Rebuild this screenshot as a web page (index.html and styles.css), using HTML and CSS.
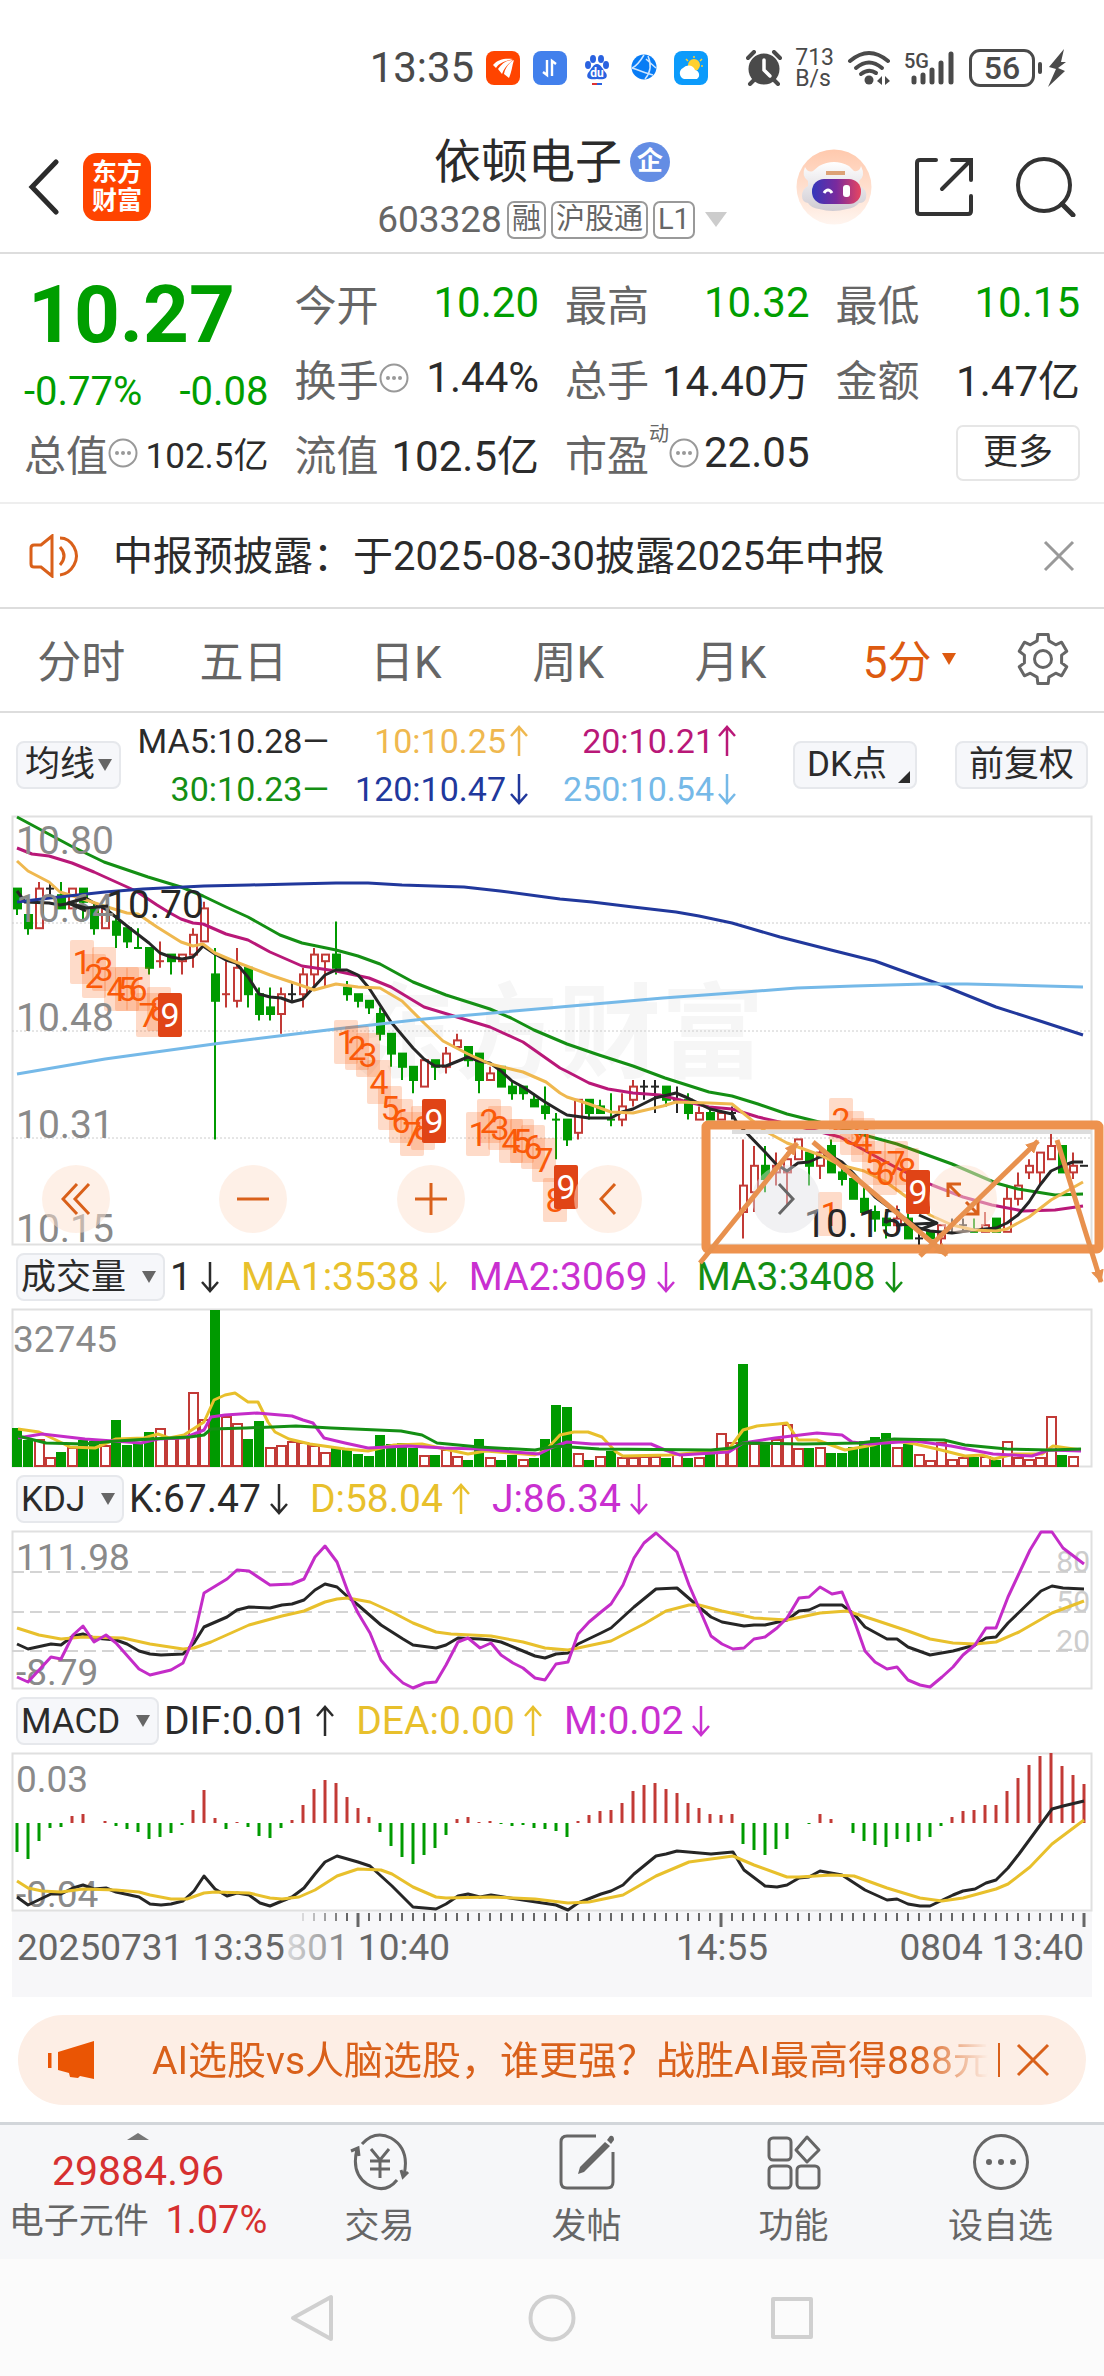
FILE: index.html
```html
<!DOCTYPE html>
<html lang="zh-CN">
<head>
    <meta charset="UTF-8">
    <meta name="viewport" content="width=device-width, initial-scale=1.0">
    <title>依顿电子 603328</title>
    <link rel="stylesheet" href="styles.css">
</head>
<body>
    <!-- Shared arrow shapes -->
    <svg class="defs" width="0" height="0" aria-hidden="true">
        <symbol id="up" viewBox="0 0 20 32"><path d="M10 31V2M2 11l8-9 8 9" fill="none" stroke="currentColor" stroke-width="2.5"/></symbol>
        <symbol id="down" viewBox="0 0 20 32"><path d="M10 1v29M2 21l8 9 8-9" fill="none" stroke="currentColor" stroke-width="2.5"/></symbol>
        <symbol id="info" viewBox="0 0 30 30"><circle cx="15" cy="15" r="13.5" fill="none" stroke="#999" stroke-width="2"/><g fill="#999"><circle cx="9" cy="15" r="2"/><circle cx="15" cy="15" r="2"/><circle cx="21" cy="15" r="2"/></g></symbol>
    </svg>

    <div class="status-bar">
        <span class="clock">13:35</span>
        <div class="app-icons">
            <svg width="34" height="34" viewBox="0 0 34 34"><rect width="34" height="34" rx="8" fill="#ff4400"/><path d="M7 14C12 8 19 7 27 8C19 10 13 12 10 17ZM12 18C16 12 21 9 27 9C22 13 18 17 16 23ZM18 23C19 17 23 12 28 9C26 15 26 20 23 27Z" fill="#fff"/></svg>
            <svg width="34" height="34" viewBox="0 0 34 34"><rect width="34" height="34" rx="8" fill="#4280ec"/><path d="M14 9v15l-4-3M19 25V10l4 3" fill="none" stroke="#fff" stroke-width="2.4"/></svg>
            <svg width="34" height="34" viewBox="0 0 34 34"><g fill="#2a62e0"><ellipse cx="13" cy="8" rx="3" ry="4"/><ellipse cx="21" cy="8" rx="3" ry="4"/><ellipse cx="8" cy="14" rx="3" ry="4"/><ellipse cx="26" cy="14" rx="3" ry="4"/><path d="M17 13c4 0 6 6 9 9 3 6-3 7-9 6-6 1-12 0-9-6 3-3 5-9 9-9z"/></g><text x="17" y="26" class="du">du</text><path d="M12 33h5" stroke="#d33" stroke-width="2"/><path d="M17 33h5" stroke="#2a62e0" stroke-width="2"/></svg>
            <svg width="34" height="34" viewBox="0 0 34 34"><circle cx="17" cy="16" r="12.500" fill="#087cf5"/><path d="M17 4C14 9 10 15 5 17M5 17C14 20 22 23 26 24M21 5C24 12 25 20 18 28M19 8l10 9" fill="none" stroke="#cfe6ff" stroke-width="1.5"/></svg>
            <svg width="34" height="34" viewBox="0 0 34 34"><rect width="34" height="34" rx="8" fill="#0c9bfb"/><circle cx="20" cy="14" r="6" fill="#ffd02e"/><path d="M20 5v2M28 8l-2 2M29 15h-2M12 8l2 2" stroke="#ffd02e" stroke-width="1.5"/><path d="M10 28a6 6 0 0 1-1-11 7 7 0 0 1 12 2 5 5 0 0 1 2 9z" fill="#fff"/></svg>
        </div>
        <div class="system-icons">
            <svg width="36" height="36" viewBox="0 0 36 36"><circle cx="18" cy="19" r="15.500" fill="#4a4a4a"/><path d="M2 8l6-6M34 8l-6-6M8 30l-4 4M28 30l4 4" stroke="#4a4a4a" stroke-width="4" stroke-linecap="round"/><path d="M18 10v10l6 6" fill="none" stroke="#fff" stroke-width="3.500" stroke-linecap="round"/></svg>
            <span class="net-speed">713<br>B/s</span>
            <svg width="44" height="36" viewBox="0 0 44 36"><g fill="none" stroke="#4a4a4a" stroke-width="4" stroke-linecap="round"><path d="M3 11Q22-5 41 11"/><path d="M9 18Q22 7 35 18"/><path d="M14 24Q22 18 29 23"/></g><circle cx="22" cy="30" r="4.500" fill="#4a4a4a"/><path d="M30 31l5-5v9zM43 31l-5-5v9z" fill="#4a4a4a"/></svg>
            <svg width="52" height="36" viewBox="0 0 52 36"><text x="0" y="18" class="net-type">5G</text><path d="M10 28v4M19 25v7M28 20v12M37 13v19M47 4v28" stroke="#4a4a4a" stroke-width="5" stroke-linecap="round"/></svg>
            <span class="battery">56</span>
            <svg width="18" height="38" viewBox="0 0 18 38"><path d="M16 0L1 18l7 2L0 38l17-16-7-3 8-6h-5z" fill="#4a4a4a"/></svg>
        </div>
    </div>

    <header class="title-bar">
        <div class="title-left">
            <button class="icon-button" aria-label="返回"><svg width="32" height="56" viewBox="0 0 32 56"><path d="M28 3L4 28l24 25" fill="none" stroke="#2b2b2b" stroke-width="5" stroke-linecap="round"/></svg></button>
            <a class="brand" href="#">东方<br>财富</a>
        </div>
        <div class="title-center">
            <h1>依顿电子<span class="badge">企</span></h1>
            <div class="code-line">603328 <span class="tag">融</span><span class="tag">沪股通</span><span class="tag">L1</span><i class="triangle"></i></div>
        </div>
        <div class="title-right">
            <button class="icon-button" aria-label="助手">
                <svg width="76" height="76" viewBox="0 0 76 76">
                    <defs>
                        <linearGradient id="halo" x2="0" y2="1"><stop stop-color="#ffc9ad"/><stop offset="1" stop-color="#fff5ef"/></linearGradient>
                        <linearGradient id="visor"><stop stop-color="#3438bb"/><stop offset=".5" stop-color="#7a2a9d"/><stop offset="1" stop-color="#e84560"/></linearGradient>
                        <linearGradient id="shell" x2="0" y2="1"><stop stop-color="#fff"/><stop offset="1" stop-color="#cfcbd2"/></linearGradient>
                    </defs>
                    <circle cx="38" cy="38" r="37.500" fill="url(#halo)"/>
                    <path d="M9 18q3 6 8 4l6-5q15-8 30 0l5 5q6 1 7-5q5 10-2 15l1 5q8 4 6 12q-1 5-7 5q-4 5-12 6q-14 4-28 0q-8-1-11-6q-6-1-6-7q0-7 6-10v-5q-7-5-3-14z" fill="url(#shell)"/>
                    <rect x="16" y="30" width="49" height="25" rx="12" fill="url(#visor)"/>
                    <path d="M28 44q4-6 8 0" fill="none" stroke="#fff" stroke-width="3"/><rect x="47" y="36" width="7" height="12" rx="3" fill="#fff"/>
                    <path d="M30 24h19" stroke="#dda276" stroke-width="4"/>
                </svg>
            </button>
            <button class="icon-button" aria-label="分享"><svg width="60" height="60" viewBox="0 0 60 60"><path d="M22 3H6Q3 3 3 6v48q0 3 3 3h48q3 0 3-3V39M38 3h19v20M57 3L28 32" fill="none" stroke="#333" stroke-width="4" stroke-linecap="round"/></svg></button>
            <button class="icon-button" aria-label="搜索"><svg width="60" height="60" viewBox="0 0 60 60"><circle cx="28" cy="28" r="26" fill="none" stroke="#333" stroke-width="4"/><path d="M46 47l11 11" stroke="#333" stroke-width="5" stroke-linecap="round"/></svg></button>
        </div>
    </header>

    <main>
        <section class="quote">
            <div class="price">
                <strong>10.27</strong>
                <div class="change"><span>-0.77%</span><span>-0.08</span></div>
            </div>
            <div class="cell"><span>今开</span><b class="fall">10.20</b></div>
            <div class="cell"><span>最高</span><b class="fall">10.32</b></div>
            <div class="cell"><span>最低</span><b class="fall">10.15</b></div>
            <div class="cell"><span>换手<svg class="info"><use href="#info"/></svg></span><b>1.44%</b></div>
            <div class="cell"><span>总手</span><b>14.40万</b></div>
            <div class="cell"><span>金额</span><b>1.47亿</b></div>
            <div class="cell"><span>总值<svg class="info"><use href="#info"/></svg></span><b class="small">102.5亿</b></div>
            <div class="cell"><span>流值</span><b>102.5亿</b></div>
            <div class="cell"><span>市盈<sup>动</sup><svg class="info"><use href="#info"/></svg></span><b>22.05</b></div>
            <div class="cell more"><button>更多</button></div>
        </section>

        <section class="notice">
            <svg width="52" height="44" viewBox="0 0 52 44"><path d="M23 2v40L12 33H5q-3 0-3-3V14q0-3 3-3h7zM31 13q8 9 0 18M31 4q9 0 14 9 5 9 0 18-5 9-14 10" fill="none" stroke="#d9601a" stroke-width="3"/></svg>
            <a href="#">中报预披露：于2025-08-30披露2025年中报</a>
            <button class="icon-button" aria-label="关闭"><svg width="32" height="32" viewBox="0 0 32 32"><path d="M2 2l28 28M30 2L2 30" stroke="#999" stroke-width="3"/></svg></button>
        </section>

        <nav class="periods">
            <button>分时</button>
            <button>五日</button>
            <button>日K</button>
            <button>周K</button>
            <button>月K</button>
            <button class="active">5分<i class="triangle"></i></button>
            <button class="gear" aria-label="设置"><svg width="52" height="52" viewBox="-26 -26 52 52"><path d="M-5.900-18.100L-5.200-24.500H5.200L5.900-18.100 12.700-14.200 18.600-16.800 23.800-7.700 18.600-3.900V3.900L23.800 7.700 18.600 16.800 12.700 14.200 5.900 18.100 5.200 24.500H-5.200L-5.900 18.100-12.700 14.200-18.600 16.800-23.800 7.700-18.600 3.900V-3.900L-23.800-7.700-18.600-16.800-12.700-14.200Z" fill="none" stroke="#666" stroke-width="3" stroke-linejoin="round"/><circle r="8.500" fill="none" stroke="#666" stroke-width="3"/></svg></button>
        </nav>

        <section class="ma-bar">
            <span class="picker"><select aria-label="主图指标"><option>均线</option></select></span>
            <div class="ma-values">
                <span>MA5:10.28—</span>
                <span class="ma10">10:10.25<svg class="arrow"><use href="#up"/></svg></span>
                <span class="ma20">20:10.21<svg class="arrow"><use href="#up"/></svg></span>
                <span class="ma30">30:10.23—</span>
                <span class="ma120">120:10.47<svg class="arrow"><use href="#down"/></svg></span>
                <span class="ma250">250:10.54<svg class="arrow"><use href="#down"/></svg></span>
            </div>
            <button class="chip corner">DK点</button>
            <button class="chip">前复权</button>
        </section>

        <section class="charts">
            <div class="main-chart">
                <svg id="kline" viewBox="0 0 1080 429"></svg>
                <div class="chart-controls">
                    <button aria-label="最左"><svg width="30" height="34" viewBox="0 0 30 34"><path d="M16 2L2 17l14 15M28 2L14 17l14 15"/></svg></button>
                    <button aria-label="缩小"><svg width="34" height="34" viewBox="0 0 34 34"><path d="M1 17h32"/></svg></button>
                    <button aria-label="放大"><svg width="34" height="34" viewBox="0 0 34 34"><path d="M1 17h32M17 1v32"/></svg></button>
                    <button aria-label="左移"><svg width="18" height="34" viewBox="0 0 18 34"><path d="M16 2L2 17l14 15"/></svg></button>
                    <button class="disabled" aria-label="右移"><svg width="18" height="34" viewBox="0 0 18 34"><path d="M2 2l14 15L2 32"/></svg></button>
                    <button aria-label="全屏"><svg width="34" height="34" viewBox="0 0 34 34"><path d="M2 15V2h13M2 2l12 12M32 19v13H19M32 32L20 20"/></svg></button>
                </div>
                <svg id="drawing" class="drawing" viewBox="0 0 1080 429" aria-hidden="true"></svg>
            </div>

            <div class="indicator-bar">
                <span class="picker wide"><select aria-label="副图一"><option>成交量</option></select></span>
                <span>1<svg class="arrow"><use href="#down"/></svg></span>
                <span class="yellow">MA1:3538<svg class="arrow"><use href="#down"/></svg></span>
                <span class="purple">MA2:3069<svg class="arrow"><use href="#down"/></svg></span>
                <span class="green">MA3:3408<svg class="arrow"><use href="#down"/></svg></span>
            </div>
            <svg id="volume" viewBox="0 0 1080 158"></svg>

            <div class="indicator-bar">
                <span class="picker wide"><select aria-label="副图二"><option>KDJ</option></select></span>
                <span>K:67.47<svg class="arrow"><use href="#down"/></svg></span>
                <span class="yellow">D:58.04<svg class="arrow"><use href="#up"/></svg></span>
                <span class="purple">J:86.34<svg class="arrow"><use href="#down"/></svg></span>
            </div>
            <svg id="kdj" viewBox="0 0 1080 158"></svg>

            <div class="indicator-bar">
                <span class="picker wide"><select aria-label="副图三"><option>MACD</option></select></span>
                <span>DIF:0.01<svg class="arrow"><use href="#up"/></svg></span>
                <span class="yellow">DEA:0.00<svg class="arrow"><use href="#up"/></svg></span>
                <span class="purple">M:0.02<svg class="arrow"><use href="#down"/></svg></span>
            </div>
            <svg id="macd" viewBox="0 0 1080 158"></svg>
            <svg id="axis" class="axis" viewBox="0 0 1080 86"></svg>
        </section>

        <section class="promo">
            <svg width="48" height="40" viewBox="0 0 48 40"><path d="M1 13v15" stroke="#ea5504" stroke-width="5"/><path d="M10 12L46 1v38l-14-3-2 2-8-1-1-4-11-3z" fill="#ea5504"/></svg>
            <a href="#">AI选股vs人脑选股，谁更强？战胜AI最高得888元</a>
            <button class="icon-button" aria-label="关闭"><svg width="34" height="34" viewBox="0 0 34 34"><path d="M2 2l30 30M32 2L2 32" stroke="#d9601a" stroke-width="3"/></svg></button>
        </section>
    </main>

    <footer>
        <nav class="tab-bar">
            <a class="index" href="#">
                <i class="triangle"></i>
                <span class="points">29884.96</span>
                <span class="sector">电子元件 <em>1.07%</em></span>
            </a>
            <a href="#"><svg width="66" height="58" viewBox="0 0 66 58"><path d="M15 11Q28-3 44 5Q63 16 57 42M50 47Q38 62 20 51Q4 40 10 16M4 18l7-3 1 8M61 39l-5 5-2-7" fill="none" stroke="#666" stroke-width="3"/><path d="M24 16l9 11 9-11M33 27v18M23 28h20M23 36h20" fill="none" stroke="#666" stroke-width="3"/></svg>交易</a>
            <a href="#"><svg width="58" height="58" viewBox="0 0 58 58"><path d="M38 3H9Q3 3 3 9v40q0 6 6 6h40q6 0 6-6V19" fill="none" stroke="#666" stroke-width="3"/><path d="M47 9l5 4-26 26-6 2 2-7zM49 7l3-4q4-1 4 4l-3 4z" fill="#666"/></svg>发帖</a>
            <a href="#"><svg width="58" height="58" viewBox="0 0 58 58"><g fill="none" stroke="#666" stroke-width="3"><rect x="4" y="5" width="22" height="22" rx="4"/><rect x="4" y="33" width="22" height="22" rx="4"/><rect x="32" y="33" width="22" height="22" rx="4"/><path d="M42 4l12 13-12 12-11-12z" stroke-linejoin="round"/></g></svg>功能</a>
            <a href="#"><svg width="58" height="58" viewBox="0 0 58 58"><circle cx="29" cy="29" r="26.500" fill="none" stroke="#666" stroke-width="3"/><g fill="#666"><circle cx="17" cy="29" r="3"/><circle cx="29" cy="29" r="3"/><circle cx="41" cy="29" r="3"/></g></svg>设自选</a>
        </nav>
        <div class="system-nav">
            <button class="icon-button" aria-label="后退"><svg width="48" height="48" viewBox="0 0 48 48"><path d="M43 3v42L5 24z" fill="none" stroke="#d0d0d0" stroke-width="4" stroke-linejoin="round"/></svg></button>
            <button class="icon-button" aria-label="主页"><svg width="48" height="48" viewBox="0 0 48 48"><circle cx="24" cy="24" r="21.500" fill="none" stroke="#d0d0d0" stroke-width="4"/></svg></button>
            <button class="icon-button" aria-label="多任务"><svg width="48" height="48" viewBox="0 0 48 48"><rect x="5" y="5" width="38" height="38" fill="none" stroke="#d0d0d0" stroke-width="4" stroke-linejoin="round"/></svg></button>
        </div>
    </footer>

    <script src="charts.js"></script>
</body>
</html>
```
FILE: styles.css
```css
/* General Styles */
* {
    box-sizing: border-box;
}

body {
    margin: 0;
    background-color: #fff;
    color: #2b2b2b;
    font-family: Roboto, "Noto Sans CJK SC", sans-serif;
}

button, select {
    font-family: inherit;
    color: inherit;
    margin: 0;
    padding: 0;
    border: 0;
    background: none;
}

a {
    color: inherit;
    text-decoration: none;
}

svg {
    display: block;
    flex: none;
}

.defs {
    position: absolute;
}

.icon-button {
    display: flex;
}

.triangle {
    border: 7px solid transparent;
    border-top: 12px solid currentColor;
    border-bottom: 0;
}

/* Status Bar */
.status-bar {
    display: flex;
    align-items: center;
    justify-content: flex-end;
    height: 111px;
    padding: 24px 38px 0 0;
    color: #4a4a4a;
}

.clock {
    font-size: 42px;
}

.app-icons {
    display: flex;
    gap: 13px;
    margin: 0 38px 0 12px;
}

.system-icons {
    display: flex;
    align-items: center;
    gap: 13px;
}

.net-speed {
    font-size: 23px;
    line-height: 21px;
}

.net-type {
    font-size: 20px;
    font-weight: 500;
    fill: #4a4a4a;
}

.du {
    font-size: 12px;
    font-weight: bold;
    text-anchor: middle;
    fill: #fff;
}

.battery {
    position: relative;
    width: 66px;
    height: 38px;
    border: 3px solid #4a4a4a;
    border-radius: 11px;
    font-size: 32px;
    font-weight: 500;
    line-height: 33px;
    text-align: center;
}

.battery::after {
    content: "";
    position: absolute;
    right: -10px;
    top: 10px;
    width: 4px;
    height: 12px;
    border-radius: 2px;
    background-color: #4a4a4a;
}

/* Title Bar */
.title-bar {
    display: grid;
    grid-template-columns: 1fr auto 1fr;
    align-items: center;
    height: 143px;
    padding: 10px 28px 0;
    border-bottom: 2px solid #ddd;
}

.title-left, .title-right {
    display: flex;
    align-items: center;
}

.title-left {
    gap: 23px;
}

.title-right {
    justify-content: flex-end;
    gap: 42px;
}

.brand {
    width: 68px;
    height: 68px;
    padding-top: 6px;
    border-radius: 14px;
    background-color: #ff4400;
    color: #fff;
    font-size: 25px;
    font-weight: bold;
    line-height: 28px;
    text-align: center;
}

.title-center {
    padding-top: 6px;
}

.title-center h1 {
    display: flex;
    align-items: center;
    justify-content: center;
    gap: 8px;
    margin: 0;
    font-size: 47px;
    font-weight: normal;
    line-height: 60px;
}

.badge {
    width: 40px;
    height: 40px;
    border-radius: 50%;
    background-color: #648de4;
    color: #fff;
    font-size: 26px;
    font-weight: bold;
    line-height: 38px;
    text-align: center;
}

.code-line {
    display: flex;
    align-items: center;
    gap: 5px;
    height: 56px;
    color: #666;
    font-size: 37px;
}

.tag {
    height: 38px;
    padding: 0 3px;
    border: 2px solid #999;
    border-radius: 7px;
    font-size: 29px;
    line-height: 33px;
}

.code-line .triangle {
    margin-left: 5px;
    border-width: 15px 11px 0;
    color: #ccc;
}

/* Quote */
.quote {
    display: grid;
    grid-template-columns: repeat(4, 1fr);
    grid-auto-rows: 75px;
    column-gap: 26px;
    padding: 11px 24px 12px;
    border-bottom: 2px solid #eee;
}

.price {
    grid-row: span 2;
    color: #009e00;
}

.price strong {
    display: block;
    padding-left: 4px;
    font-size: 80px;
    font-weight: bold;
    line-height: 100px;
}

.change {
    display: flex;
    justify-content: space-between;
    font-size: 40px;
    line-height: 54px;
}

.cell {
    display: flex;
    align-items: center;
    justify-content: space-between;
    font-size: 42px;
    white-space: nowrap;
}

.cell span {
    display: flex;
    align-items: center;
    color: #666;
}

.cell b {
    font-weight: normal;
}

.cell .fall {
    color: #009e00;
}

.cell .small {
    font-size: 35px;
}

.cell sup {
    align-self: flex-start;
    font-size: 20px;
    line-height: 24px;
}

.info {
    width: 30px;
    height: 30px;
}

.more {
    justify-content: flex-end;
}

.more button {
    width: 124px;
    height: 56px;
    border: 2px solid #e6e6e6;
    border-radius: 7px;
    font-size: 35px;
    line-height: 46px;
}

/* Notice */
.notice {
    display: flex;
    align-items: center;
    height: 105px;
    padding: 0 29px;
    border-bottom: 2px solid #ddd;
    font-size: 40px;
}

.notice a {
    flex: 1;
    margin-left: 32px;
    padding-bottom: 6px;
    white-space: nowrap;
}

/* Period Tabs */
.periods {
    display: grid;
    grid-template-columns: repeat(5, 5fr) 6fr 3fr;
    height: 104px;
    border-bottom: 2px solid #ddd;
}

.periods button {
    display: flex;
    align-items: center;
    justify-content: center;
    padding-bottom: 2px;
    color: #666;
    font-size: 44px;
}

.periods .active {
    gap: 10px;
    color: #dd5a10;
}

.periods .gear {
    padding-right: 24px;
}

/* MA Bar */
.ma-bar {
    display: flex;
    align-items: center;
    height: 103px;
    padding: 0 16px;
    font-size: 34px;
}

.ma-values {
    display: grid;
    grid-template-columns: 208px 200px 208px;
    grid-auto-rows: 48px;
    align-items: center;
    justify-items: end;
    margin-right: auto;
}

.ma-values span, .indicator-bar > span {
    display: flex;
    align-items: center;
}

.arrow {
    width: 20px;
    height: 32px;
    margin-left: 8px;
}

.ma-values .arrow {
    margin-left: 3px;
}

.ma10 { color: #efb84f; }
.ma20 { color: #b91878; }
.ma30 { color: #148f14; }
.ma120 { color: #21389c; }
.ma250 { color: #75b9e8; }

.picker {
    position: relative;
}

.picker::after {
    content: "";
    position: absolute;
    right: 9px;
    top: 18px;
    border: 7px solid transparent;
    border-top: 12px solid #666;
    border-bottom: 0;
    pointer-events: none;
}

.picker select, .chip {
    height: 48px;
    border: 2px solid #e6e8ec;
    border-radius: 8px;
    background-color: #f6f7fa;
    font-size: 35px;
}

.picker select {
    appearance: none;
    padding: 0 23px 0 7px;
}

.picker.wide select {
    padding: 0 36px 0 3px;
}

.chip {
    padding: 0 12px;
    line-height: 40px;
}

.chip + .chip {
    margin-left: 38px;
}

.chip.corner {
    position: relative;
    padding-right: 28px;
}

.chip.corner::after {
    content: "";
    position: absolute;
    right: 5px;
    bottom: 4px;
    border-left: 12px solid transparent;
    border-bottom: 12px solid #2b2b2b;
}

/* Charts */
.charts {
    margin: 0 12px;
}

.charts > svg, .main-chart > svg {
    width: 100%;
    overflow: visible;
    font-size: 37px;
}

.main-chart > svg {
    font-size: 39px;
}

.main-chart {
    position: relative;
}

.main-chart .drawing {
    position: absolute;
    left: 0;
    top: 0;
    pointer-events: none;
}

.chart-controls {
    position: absolute;
    left: 30px;
    right: 95px;
    bottom: 12px;
    display: flex;
    justify-content: space-between;
}

.chart-controls button {
    display: flex;
    align-items: center;
    justify-content: center;
    width: 68px;
    height: 68px;
    border-radius: 50%;
    background-color: rgba(253, 226, 208, 0.5);
    color: #d9601a;
}

.chart-controls .disabled {
    background-color: rgba(225, 225, 228, 0.45);
    color: #666;
}

.chart-controls path {
    fill: none;
    stroke: currentColor;
    stroke-width: 3;
}

.indicator-bar {
    display: flex;
    align-items: center;
    gap: 21px;
    height: 64px;
    padding-left: 4px;
    font-size: 39px;
}

.indicator-bar .picker + span {
    margin-left: -16px;
}

.yellow { color: #e8c02c; }
.purple { color: #c930d0; }
.green { color: #148f14; }

.axis {
    background-color: #f7f7f9;
}

.scale { fill: #8a8a8a; }
.mark { font-size: 34px; text-anchor: middle; fill: #fa5a0a; }
.watermark { font-size: 103px; font-weight: bold; fill: #f6f6f6; }
.level { font-size: 30px; text-anchor: end; fill: #ccc; }
.time { font-size: 37px; fill: #666; }

/* Promo */
.promo {
    display: flex;
    align-items: center;
    height: 90px;
    margin: 18px 18px 17px;
    padding: 0 36px 0 30px;
    border-radius: 45px;
    background-color: #fdeee5;
    color: #d9601a;
    font-size: 39px;
}

.promo a {
    flex: 1;
    margin-left: 56px;
    padding-bottom: 6px;
    overflow: hidden;
    white-space: nowrap;
    -webkit-mask-image: linear-gradient(to left, transparent 10px, #000 80px);
    mask-image: linear-gradient(to left, transparent 10px, #000 80px);
}

.promo button {
    padding-left: 16px;
    border-left: 2px solid #d9601a;
}

/* Footer */
.tab-bar {
    display: grid;
    grid-template-columns: 4fr 3fr 3fr 3fr 3fr;
    height: 137px;
    border-top: 3px solid #d2d6da;
    background-color: #f6f7f9;
}

.tab-bar a {
    display: flex;
    flex-direction: column;
    align-items: center;
    gap: 10px;
    padding-top: 8px;
    color: #666;
    font-size: 35px;
    line-height: 52px;
}

.tab-bar .index {
    gap: 0;
    color: #d63030;
}

.index .triangle {
    border-width: 0 11px 7px;
    border-bottom: 7px solid #777;
}

.index .points {
    font-size: 41px;
    line-height: 62px;
}

.index .sector {
    color: #666;
    line-height: 36px;
}

.index em {
    margin-left: 8px;
    color: #d63030;
    font-size: 38px;
    font-style: normal;
}

.system-nav {
    display: flex;
    align-items: center;
    justify-content: center;
    gap: 192px;
    height: 117px;
    background-color: #fbfbfb;
}
```
FILE: charts.js
```js
const RED = '#c23a36';
const GREEN = '#009a00';
const BLACK = '#262626';
const YELLOW = '#e8c02c';
const PURPLE = '#c42cc8';
const STEP = 11;

// One candle is [type, high, body top, body bottom, low], in cents below 10.80.
// r = up, g = down, b = flat
const candles = [
    'g 11 11 14 15', 'g 14 15 17 18', 'r 10 11 17 17', 'b 10 11 11 12', 'g 10 12 14 14', 'r 11 11 14 14',
    'g 11 11 13 16', 'g 13 14 17 18', 'r 14 14 17 17', 'g 15 16 18 20', 'g 17 17 19 20', 'g 17 20 20 20',
    'g 20 20 23 24', 'r 19 22 22 23', 'g 21 21 22 24', 'r 21 21 22 24', 'r 17 18 21 23', 'r 13 14 19 19',
    'g 20 24 28 49', 'r 22 27 27 29', 'r 20 23 28 29', 'g 23 23 27 29', 'g 26 27 30 31', 'g 26 29 30 31',
    'r 26 27 30 33', 'b 25 27 27 28', 'r 23 24 27 29', 'r 20 21 24 26', 'r 21 21 22 26', 'g 16 21 23 24',
    'g 25 26 27 28', 'g 27 27 28 29', 'g 28 28 29 30', 'g 29 30 33 34', 'g 33 33 36 38', 'g 36 36 38 40',
    'g 38 38 40 42', 'r 37 37 41 41', 'g 37 37 38 40', 'r 35 36 38 39', 'r 33 34 35 35', 'g 35 35 37 38',
    'g 36 36 40 42', 'r 38 39 40 40', 'g 38 38 41 41', 'g 40 41 42 43', 'g 41 41 42 43', 'g 42 43 44 44',
    'g 41 44 45 46', 'g 45 46 46 52', 'g 46 46 49 50', 'r 43 43 48 49', 'g 43 43 45 46', 'g 43 44 45 45',
    'g 42 46 46 47', 'r 42 44 46 47', 'r 40 41 43 44', 'b 40 41 41 43', 'b 40 41 41 45', 'g 41 41 43 44',
    'b 41 43 43 45', 'g 42 43 45 46', 'r 44 45 46 46', 'g 44 45 46 46', 'r 45 45 46 46', 'b 44 45 45 46',
    'r 49 56 60 64', 'r 50 53 57 60', 'g 50 53 55 57', 'r 51 53 54 56', 'r 51 52 54 59', 'r 49 49 52 52',
    'g 51 51 53 56', 'r 50 51 53 55', 'g 49 50 54 54', 'g 53 54 55 56', 'g 55 55 58 58', 'g 56 58 60 60',
    'g 59 60 61 63', 'g 60 61 62 64', 'r 59 61 62 63', 'g 60 61 64 64', 'b 63 64 64 65', 'g 63 63 64 64',
    'r 62 62 64 65', 'b 61 62 62 63', 'b 61 62 62 63', 'g 61 63 63 63', 'r 60 62 63 63', 'g 61 61 63 63',
    'r 56 58 63 63', 'r 54 56 58 59', 'r 52 53 54 55', 'r 51 51 54 56', 'r 48 50 52 52', 'g 50 50 54 54',
    'r 51 53 54 55', 'b 53 53 53 53'
];

// Bar heights, negative for a down bar
const volumes = [
    -39, -27, 27, 9, -15, 19, -27, -26, 21, -47, -22, -24, -35, 38, 28, 29, 74, 47, -157, 50, 43, -28, -46, 19, 21,
    25, 24, 21, 14, -19, -17, -13, -11, -32, -23, -24, -19, 11, -12, 17, 10, -7, -28, 9, -7, -12, 7, -9, -28, -62,
    -60, 13, -7, 10, -16, 9, 9, 10, 10, -9, 13, -9, 9, -14, 33, 24, -103, 23, -23, 27, 42, 18, -19, 19, -14,
    -14, -20, -26, -30, -34, 19, -23, 12, 6, 24, 7, 9, -10, 10, -7, 25, 9, 7, 9, 50, -12, 10, 1
];

const macdBars = [
    -29, -36, -18, -5, -4, 7, 9, 0, 2, -3, -6, -9, -16, -14, -10, -2, 13, 33, 5, -6, 1, -4, -13, -15, -5,
    3, 18, 34, 43, 40, 26, 15, 6, -9, -23, -34, -41, -32, -25, -12, 4, 6, 1, 2, -1, -3, -2, -5, -6, -8,
    -14, 2, 8, 12, 13, 20, 32, 38, 40, 34, 30, 20, 15, 9, 8, 9, -21, -27, -32, -26, -16, 0, -1, 9, 4,
    0, -10, -18, -22, -24, -16, -19, -18, -14, -3, 6, 12, 13, 18, 18, 32, 45, 58, 67, 70, 57, 48, 39
];

const averages = {
    '#148f14': '5,1 59,30 92,46 136,61 169,71 191,80 214,91 236,101 268,119 290,127 324,134 346,140 368,148 401,166 434,179 478,193 499,202 522,214 555,228 587,239 621,250 653,262 697,276 720,280 746,288 775,298 819,309 852,319 885,328 940,348 984,367 1006,373 1043,379 1071,378',
    '#b91878': '5,32 20,38 37,40 60,47 82,56 93,61 124,75 145,89 158,97 169,103 181,107 191,108 214,118 236,124 258,136 290,150 324,155 357,162 379,171 412,191 445,201 478,211 511,226 548,252 556,256 577,267 596,273 621,277 648,279 676,286 697,291 720,293 746,301 785,310 828,321 852,334 885,352 920,369 951,381 980,389 1011,395 1043,394 1071,390',
    '#262626': '5,75 13,86 37,87 48,89 60,87 72,81 82,87 95,94 115,110 137,127 148,137 159,141 170,143 181,141 191,130 203,138 214,144 224,147 236,161 247,178 258,181 269,182 280,186 291,183 302,171 313,159 324,154 335,154 346,159 357,172 379,206 401,232 412,243 423,250 434,250 456,241 467,245 478,247 489,255 500,265 511,271 533,286 548,295 555,299 577,302 599,302 610,296 621,293 643,282 664,277 676,282 698,293 720,298 725,307 753,336 764,348 775,355 786,347 797,346 808,341 819,340 830,346 841,357 863,381 885,397 907,412 918,415 940,417 962,414 984,412 995,407 1006,399 1017,386 1028,369 1039,355 1050,350 1061,346 1071,346',
    '#efb84f': '5,45 16,55 37,66 48,76 71,83 92,90 115,97 126,98 145,111 169,126 181,130 191,128 203,137 224,146 258,159 291,170 302,174 324,168 346,171 368,172 390,185 412,207 431,225 456,238 478,248 511,256 534,266 548,277 555,281 577,288 599,296 621,297 651,290 664,286 697,287 720,288 736,301 753,315 775,327 808,339 828,349 852,355 874,366 896,382 918,399 940,409 962,414 984,415 995,413 1017,401 1039,384 1071,366',
    '#21389c': '5,86 38,82 93,76 131,73 192,70 238,69 281,68 324,67 356,67 390,69 452,71 488,75 548,83 580,86 621,91 664,96 687,100 720,107 768,121 819,134 863,145 885,153 927,168 984,191 1028,205 1071,219',
    '#75b9e8': '5,258 93,243 202,228 324,213 412,203 548,191 651,182 720,177 785,172 842,170 913,168 955,168 1071,171'
};

// Nine-turn marks: digit, centre x, centre y
const marks = [
    [1, 70, 146], [2, 82, 160], [3, 92, 153], [4, 104, 173], [5, 115, 173], [6, 126, 173], [7, 136, 199], [8, 147, 193], [9, 158, 199],
    [1, 334, 226], [2, 345, 232], [3, 356, 239], [4, 367, 266], [5, 378, 292], [6, 389, 305], [7, 400, 318], [8, 411, 312], [9, 422, 305],
    [1, 466, 318], [2, 477, 305], [3, 488, 312], [4, 499, 325], [5, 510, 325], [6, 521, 331], [7, 532, 344], [8, 543, 384], [9, 554, 371],
    [1, 818, 398], [2, 829, 304], [3, 840, 317], [4, 851, 324], [5, 862, 347], [6, 873, 357], [7, 884, 347], [8, 895, 354], [9, 906, 376]
];

function line(points, color, width = 3) {
    return `<polyline points="${points}" fill="none" stroke="${color}" stroke-width="${width}" stroke-linejoin="round"/>`;
}

function frame(height) {
    return `<rect x="0.5" y="0.5" width="1079" height="${height - 1}" fill="none" stroke="#e0e0e0" stroke-width="2"/>`;
}

function scale(text, y) {
    return `<text class="scale" x="4" y="${y}">${text}</text>`;
}

function centre(i) {
    return 5 + i * STEP;
}

function drawKline() {
    let out = '<text class="watermark" x="340" y="254">东方财富</text>' + frame(429);
    [107, 215, 322].forEach(y => {
        out += `<path d="M0 ${y}H1079" stroke="#ccc" stroke-dasharray="2 2"/>`;
    });

    candles.forEach((row, i) => {
        const [type, ...levels] = row.split(' ');
        const [high, top, bottom, low] = levels.map(v => v * 6.6);
        const color = { r: RED, g: GREEN, b: BLACK }[type];
        const x = centre(i);
        out += `<path d="M${x} ${high}V${top}M${x} ${bottom}V${low}" stroke="${color}" stroke-width="2"/>`;
        if (top === bottom) {
            out += `<path d="M${x - 4} ${top}h8" stroke="${color}" stroke-width="2"/>`;
        } else {
            const fill = type === 'g' ? color : 'none';
            out += `<rect x="${x - 3}" y="${top}" width="7" height="${bottom - top}" fill="${fill}" stroke="${color}" stroke-width="2"/>`;
        }
    });

    Object.keys(averages).forEach(color => {
        out += line(averages[color], color);
    });

    marks.forEach(([n, x, y]) => {
        const last = n === 9;
        out += `<rect x="${x - 12}" y="${y - 22}" width="24" height="44" rx="2" fill="${last ? '#e04416' : '#fa5a0a'}" fill-opacity="${last ? 1 : 0.22}"/>`;
        out += `<text class="mark" x="${x}" y="${y + 12}"${last ? ' style="fill:#fff"' : ''}>${n}</text>`;
    });

    out += scale('10.80', 38) + scale('10.64', 106) + scale('10.48', 215) + scale('10.31', 322) + scale('10.15', 426);
    out += line('74,95 56,87 74,82', BLACK) + line('56,87 74,92 96,90', BLACK);
    out += line('907,399 925,407 907,414', BLACK) + line('884,409 925,407', BLACK);
    out += `<text x="94" y="102" fill="${BLACK}">10.70</text><text x="792" y="421" fill="${BLACK}">10.15</text>`;
    document.getElementById('kline').innerHTML = out;
}

function drawAnnotation() {
    const arrows = [[688, 447, 785, 327], [801, 326, 935, 439], [908, 440, 1026, 325], [1045, 324, 1089, 466]];
    let out = '<defs><marker id="head" viewBox="0 0 12 12" refX="11" refY="6" markerWidth="13" markerHeight="13" markerUnits="userSpaceOnUse" orient="auto"><path d="M0 0l12 6L0 12z" fill="#e8914e"/></marker></defs>';
    out += '<path d="M720 316h359" stroke="#ddd" stroke-width="4"/>';
    out += '<rect x="694" y="309" width="393" height="124" rx="2" fill="none" stroke="#ee924e" stroke-width="9"/>';
    arrows.forEach(([x1, y1, x2, y2]) => {
        out += `<path d="M${x1} ${y1}L${x2} ${y2}" stroke="#e8914e" stroke-width="5" marker-end="url(#head)"/>`;
    });
    document.getElementById('drawing').innerHTML = out;
}

function drawVolume() {
    let out = frame(158);
    volumes.forEach((v, i) => {
        const h = Math.abs(v);
        const x = centre(i);
        if (v < 0) {
            out += `<rect x="${x - 5}" y="${158 - h}" width="10" height="${h}" fill="${GREEN}"/>`;
        } else {
            out += `<rect x="${x - 4}" y="${158 - h}" width="9" height="${h - 1}" fill="#fff" stroke="${RED}" stroke-width="2"/>`;
        }
    });
    out += line('6,120 27,123 44,131 58,138 83,139 104,130 132,129 146,125 157,129 172,126 192,113 202,91 213,86 223,84 236,93 246,93 256,113 263,123 277,130 298,135 333,140 356,142 382,136 410,135 428,139 456,145 474,142 523,146 534,141 548,126 562,123 576,123 590,128 604,143 611,147 657,146 692,143 717,140 731,121 745,117 766,115 775,114 786,131 805,131 833,141 861,136 877,131 903,135 925,140 953,147 970,146 982,150 1002,145 1030,145 1041,137 1069,141', YELLOW);
    out += line('6,129 30,125 73,130 129,134 146,130 172,129 192,121 199,108 213,106 245,104 280,107 291,111 301,114 312,129 333,134 356,139 396,137 432,139 467,140 527,145 541,138 555,133 580,135 639,135 653,141 668,146 717,143 731,134 763,129 805,124 830,126 840,133 858,135 903,132 939,137 981,145 1020,147 1037,141 1069,142', PURPLE);
    out += line('6,127 34,134 73,135 104,132 139,130 178,128 192,126 199,120 234,119 284,117 319,119 389,122 410,126 425,134 467,138 523,141 544,137 587,140 699,141 720,139 731,134 791,135 847,134 882,130 932,131 953,136 995,140 1037,141 1069,140', '#148f14');
    out += `<text class="scale" x="1" y="43">32745</text>`;
    document.getElementById('volume').innerHTML = out;
}

function drawKdj() {
    let out = frame(158);
    [[41, 80], [81, 50], [120, 20]].forEach(([y, label]) => {
        out += `<path d="M0 ${y}H1079" stroke="#d4d4d4" stroke-width="2" stroke-dasharray="12 6"/>`;
        out += `<text class="level" x="1078" y="${y}">${label}</text>`;
    });
    out += scale('111.98', 39) + scale('-8.79', 154);
    out += line('5,113 16,118 39,113 49,114 61,105 71,103 82,107 104,109 115,113 127,120 138,123 149,124 171,123 182,112 192,96 215,86 225,79 237,76 258,77 270,74 280,73 292,69 303,59 313,53 325,56 336,66 346,74 369,94 391,108 401,114 424,117 434,114 446,107 468,108 479,109 489,111 511,120 523,125 533,127 544,123 556,122 566,113 589,102 599,97 622,76 644,58 665,57 687,76 699,86 710,91 732,95 742,94 753,94 775,89 787,80 797,79 808,74 830,74 842,83 853,96 875,108 885,108 896,116 918,124 941,120 963,114 974,107 984,106 996,92 1029,60 1040,55 1051,57 1072,58', BLACK);
    out += line('5,97 27,104 49,108 71,106 111,107 138,113 171,118 182,117 199,111 237,94 270,85 292,80 313,71 325,68 336,67 358,71 380,81 401,92 424,101 439,103 479,105 511,111 533,117 556,119 566,117 599,110 632,93 654,80 677,74 687,74 710,80 742,87 775,89 808,82 835,80 863,89 896,100 918,108 941,112 963,113 984,111 1007,101 1040,82 1072,70', YELLOW);
    out += line('5,146 16,151 39,126 49,128 61,104 71,95 82,111 94,104 104,112 127,138 138,144 159,139 171,132 182,106 192,62 215,48 225,39 237,40 258,54 280,53 292,48 303,26 313,15 325,31 336,61 346,82 358,102 369,129 380,142 391,152 401,157 413,152 424,151 434,134 446,111 456,107 468,117 479,112 489,124 501,132 511,137 523,147 533,149 544,133 556,131 566,103 577,91 589,81 599,73 611,54 622,27 632,12 644,2 654,11 665,21 677,54 687,77 699,105 710,113 721,118 732,117 742,108 753,106 765,97 775,87 787,67 797,66 808,56 820,63 830,61 842,89 853,120 863,131 875,138 885,136 896,149 908,154 918,156 930,146 941,136 951,124 963,114 974,97 984,97 996,66 1018,19 1029,1 1040,1 1051,17 1072,33', PURPLE);
    document.getElementById('kdj').innerHTML = out;
}

function drawMacd() {
    let out = frame(158) + scale('0.03', 39) + scale('-0.04', 154);
    macdBars.forEach((v, i) => {
        out += `<path d="M${centre(i)} 70v${-v}" stroke="${v > 0 ? RED : GREEN}" stroke-width="3"/>`;
    });
    out += line('5,144 16,152 39,141 49,141 61,135 71,132 82,136 94,135 104,139 127,144 138,151 149,152 159,151 171,148 182,138 192,123 203,136 215,143 225,140 237,142 248,150 258,153 270,148 280,144 292,135 303,121 313,109 325,103 346,109 358,113 369,123 380,133 401,154 424,156 434,151 446,143 456,141 468,144 479,142 511,147 544,152 556,157 566,150 589,141 599,138 611,132 622,121 644,103 654,101 665,98 699,101 721,99 732,117 753,133 765,134 775,132 787,125 797,124 808,118 830,122 853,137 875,147 885,146 896,151 908,153 918,153 941,142 951,138 963,136 974,130 984,127 996,115 1007,101 1029,71 1040,56 1051,53 1072,48', BLACK);
    out += line('5,128 16,135 30,138 49,139 71,136 104,137 127,139 138,142 159,146 175,146 192,140 203,139 237,140 258,145 270,146 287,144 303,137 325,123 346,116 369,117 380,121 401,134 424,144 434,145 479,144 523,146 556,150 577,149 611,142 644,123 677,109 699,106 721,103 742,112 775,124 787,124 820,122 842,123 875,135 908,145 930,148 951,145 984,136 996,131 1018,114 1040,91 1072,67', YELLOW);
    document.getElementById('macd').innerHTML = out;
}

function drawAxis() {
    let out = '<defs><linearGradient id="fade" gradientUnits="userSpaceOnUse" x1="265" x2="350"><stop stop-color="#666" stop-opacity="0.1"/><stop offset="1" stop-color="#666"/></linearGradient></defs>';
    for (let i = 26; i < candles.length; i++) {
        const major = i === 31 || i === 64 || i === 97;
        const shade = i < 31 ? 0.2 * (i - 25) : 1;
        out += `<path d="M${centre(i)} 2v${major ? 14 : 8}" stroke="#666" stroke-opacity="${shade}" stroke-width="${major ? 3 : 2}"/>`;
    }
    out += '<text class="time" x="5" y="49">20250731 13:35</text>';
    out += '<text class="time" x="438" y="49" text-anchor="end" style="fill:url(#fade)">801 10:40</text>';
    out += '<text class="time" x="710" y="49" text-anchor="middle">14:55</text>';
    out += '<text class="time" x="1072" y="49" text-anchor="end">0804 13:40</text>';
    document.getElementById('axis').innerHTML = out;
}

drawKline();
drawAnnotation();
drawVolume();
drawKdj();
drawMacd();
drawAxis();
```
